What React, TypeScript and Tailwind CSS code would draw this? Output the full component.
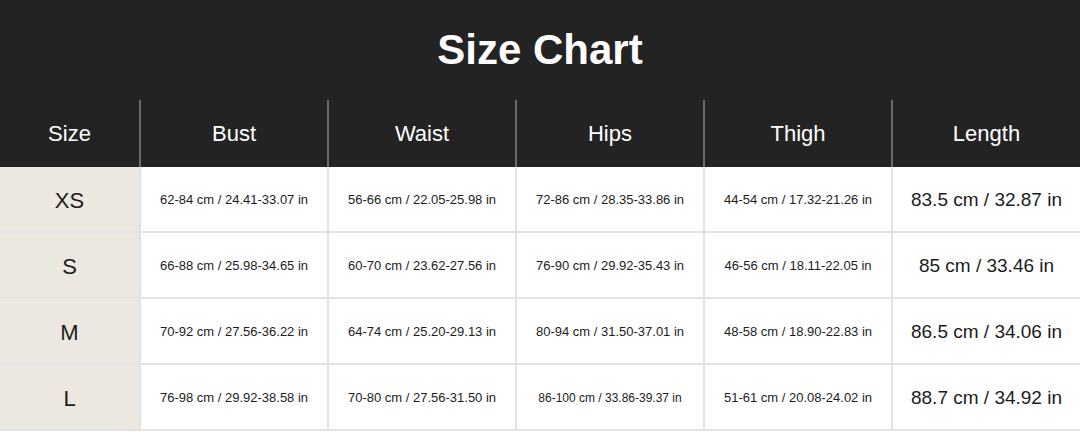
const columns = ['Size', 'Bust', 'Waist', 'Hips', 'Thigh', 'Length'];

const rows = [
    {
        size: 'XS',
        cells: ['62-84 cm / 24.41-33.07 in', '56-66 cm / 22.05-25.98 in', '72-86 cm / 28.35-33.86 in', '44-54 cm / 17.32-21.26 in'],
        length: '83.5 cm / 32.87 in',
    },
    {
        size: 'S',
        cells: ['66-88 cm / 25.98-34.65 in', '60-70 cm / 23.62-27.56 in', '76-90 cm / 29.92-35.43 in', '46-56 cm / 18.11-22.05 in'],
        length: '85 cm / 33.46 in',
    },
    {
        size: 'M',
        cells: ['70-92 cm / 27.56-36.22 in', '64-74 cm / 25.20-29.13 in', '80-94 cm / 31.50-37.01 in', '48-58 cm / 18.90-22.83 in'],
        length: '86.5 cm / 34.06 in',
    },
    {
        size: 'L',
        cells: ['76-98 cm / 29.92-38.58 in', '70-80 cm / 27.56-31.50 in', '86-100 cm / 33.86-39.37 in', '51-61 cm / 20.08-24.02 in'],
        length: '88.7 cm / 34.92 in',
    },
];

export default function App() {
    return (
        <div className="w-[1080px] h-[432px] bg-white overflow-hidden font-['Liberation_Sans',Arial,sans-serif] text-[#1c1c1c]">
            {/* Title */}
            <div className="h-[100px] bg-[#232323] flex items-center justify-center">
                <h1 className="text-[42px] font-bold text-white leading-none">Size Chart</h1>
            </div>

            {/* Column headers */}
            <div className="grid grid-cols-[141px_repeat(4,188px)_187px] h-[67px] bg-[#232323]">
                {columns.map((c, i) => (
                    <div
                        key={c}
                        className={
                            'flex items-center justify-center text-[22px] text-white ' +
                            (i < columns.length - 1 ? 'border-r-2 border-[#6a6a6a]' : '')
                        }
                    >
                        {c}
                    </div>
                ))}
            </div>

            {/* Body */}
            {rows.map((r) => (
                <div key={r.size} className="grid grid-cols-[141px_repeat(4,188px)_187px] h-[66px]">
                    <div className="flex items-center justify-center pt-[2px] bg-[#ece8df] text-[22px] border-r-2 border-b-2 border-[#e2e2e2]">
                        {r.size}
                    </div>
                    {r.cells.map((v) => (
                        <div
                            key={v}
                            className={
                                'flex items-center justify-center pt-[2px] border-r-2 border-b-2 border-[#e2e2e2] ' +
                                (v.startsWith('86-100') ? 'text-[12px]' : 'text-[13px]')
                            }
                        >
                            {v}
                        </div>
                    ))}
                    <div className="flex items-center justify-center pt-[2px] text-[19px] border-b-2 border-[#e2e2e2]">
                        {r.length}
                    </div>
                </div>
            ))}
        </div>
    );
}
